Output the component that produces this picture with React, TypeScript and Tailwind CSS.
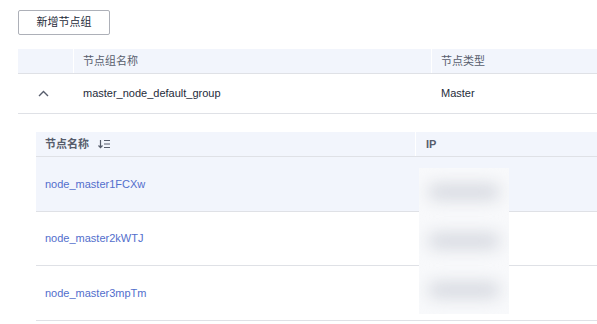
const nodes = ["node_master1FCXw", "node_master2kWTJ", "node_master3mpTm"];
const rowHeights = ["h-[55px]", "h-[54px]", "h-[55px]"];

function SortIcon() {
  return (
    <svg width="14" height="10" viewBox="0 0 14 10" className="ml-[8px]">
      <path d="M3.5 1v7.5M1.5 6.5l2 2.2 2-2.2" stroke="#575d6c" strokeWidth="1.2" fill="none" />
      <path d="M7 1.5h6M7 5h6M7 8.5h6" stroke="#575d6c" strokeWidth="1.1" fill="none" />
    </svg>
  );
}

export default function App() {
  return (
    <div
      className="relative h-[324px] w-[597px] overflow-hidden bg-white text-[11px] text-[#252b3a]"
      style={{ fontFamily: '"Liberation Sans", "Noto Sans CJK SC", sans-serif' }}
    >
      <div className="pl-[18px] pt-[10px]">
        <button className="flex h-[25px] w-[92px] items-center justify-center rounded-[2px] border border-[#adb0b8] bg-white text-[11px] text-[#252b3a]">
          新增节点组
        </button>
      </div>

      <div className="ml-[18px] mt-[14px]">
        <div className="flex h-[25px] items-center border-b border-[#dfe1e6] bg-[#f2f5fc] text-[#575d6c]">
          <div className="h-full w-[56px] border-r border-white" />
          <div className="flex h-full w-[358px] items-center border-r border-white pl-[9px]">节点组名称</div>
          <div className="pl-[9px]">节点类型</div>
        </div>
        <div className="flex h-[40px] items-center border-b border-[#dfe1e6]">
          <div className="flex w-[56px] pl-[20px]">
            <svg width="11" height="7" viewBox="0 0 11 7">
              <path d="M1 6l4.5-4.5L10 6" stroke="#575d6c" strokeWidth="1.4" fill="none" />
            </svg>
          </div>
          <div className="w-[358px] pl-[9px]">master_node_default_group</div>
          <div className="pl-[9px]">Master</div>
        </div>

        <div className="pl-[18px] pt-[18px]">
          <div className="relative">
            <div className="flex h-[25px] items-center border-b border-[#dfe1e6] bg-[#f2f5fc] font-bold text-[#575d6c]">
              <div className="flex h-full w-[380px] items-center border-r border-white pl-[9px]">
                节点名称
                <SortIcon />
              </div>
              <div className="pl-[10px]">IP</div>
            </div>
            {nodes.map((n, i) => (
              <div
                key={n}
                className={`flex ${rowHeights[i]} items-center border-b border-[#dfe1e6] ${i === 0 ? "bg-[#f2f5fc]" : "bg-white"}`}
              >
                <div className="w-[380px] pl-[9px] text-[#526ecc]">{n}</div>
                <div className="pl-[10px]" />
              </div>
            ))}

            <div className="absolute left-[383px] top-[36px] flex h-[146px] w-[90px] flex-col overflow-hidden bg-[#f8f9fb]">
              {[0, 1, 2].map((k) => (
                <div key={k} className="flex flex-1 items-center justify-center">
                  <div className="h-[16px] w-[72px] rounded-full bg-[#d6d9e0] blur-[8px]" />
                </div>
              ))}
            </div>
          </div>
        </div>
      </div>
    </div>
  );
}
